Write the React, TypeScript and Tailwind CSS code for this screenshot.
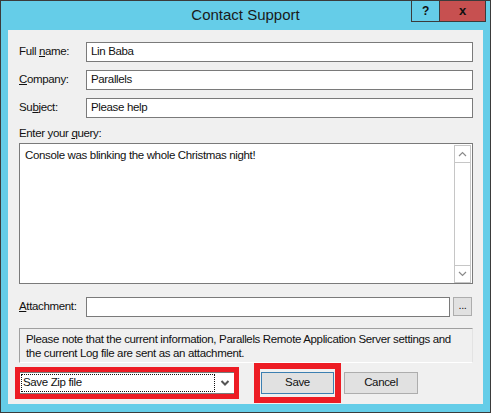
import { ReactNode } from 'react';

const font = "font-['Liberation_Sans',Arial,sans-serif]";

function Field({ label, value }: { label: ReactNode; value: string }) {
    return (
        <div className="flex h-[20px] items-center">
            <div className="w-[67px] shrink-0">{label}</div>
            <div className="flex h-[20px] flex-1 items-center border border-[#7a7a7a] bg-white pl-[4px]">
                {value}
            </div>
        </div>
    );
}

function Chevron({ up, className }: { up?: boolean; className?: string }) {
    return (
        <svg width="9" height="6" viewBox="0 0 9 6" className={className}>
            <polyline
                points={up ? '1,5 4.5,1.5 8,5' : '1,1 4.5,4.5 8,1'}
                fill="none"
                stroke="currentColor"
                strokeWidth="1.2"
            />
        </svg>
    );
}

export default function App() {
    return (
        <div
            className={`flex h-[413px] w-[491px] flex-col border border-[#3b3b3b] bg-[#65cde8] ${font} text-[11.5px] tracking-[-0.35px] text-[#111]`}
        >
            {/* Title bar */}
            <div className="relative flex h-[29px] shrink-0 items-center justify-center">
                <span className="text-[15px] tracking-normal text-[#1a1a1a]">Contact Support</span>
                <div className="absolute right-[4px] top-[-1px] flex">
                    <div className="flex h-[22px] w-[29px] items-center justify-center border border-[#3b3b3b] bg-[#65cde8] text-[12px] font-bold">
                        ?
                    </div>
                    <div className="-ml-px flex h-[22px] w-[47px] items-center justify-center border border-[#3b3b3b] bg-[#c75050] text-[13px] font-bold">
                        x
                    </div>
                </div>
            </div>

            {/* Client area */}
            <div className="mx-[7px] flex h-[374px] flex-col bg-[#f0f0f0] pl-[11px] pr-[10px] pt-[12px]">
                <div className="flex flex-col gap-[8px]">
                    <Field
                        label={
                            <>
                                Full <span className="underline">n</span>ame:
                            </>
                        }
                        value="Lin Baba"
                    />
                    <Field
                        label={
                            <>
                                <span className="underline">C</span>ompany:
                            </>
                        }
                        value="Parallels"
                    />
                    <Field
                        label={
                            <>
                                Su<span className="underline">b</span>ject:
                            </>
                        }
                        value="Please help"
                    />
                </div>

                <div className="mt-[8px] h-[14px] leading-[14px]">
                    Enter your <span className="underline">q</span>uery:
                </div>

                <div className="mt-[3px] flex h-[141px] border border-[#7a7a7a] bg-white">
                    <div className="flex-1 pl-[5px] pt-[4px] leading-[14px]">
                        Console was blinking the whole Christmas night!
                    </div>
                    <div className="mr-px mt-px flex h-[138px] w-[17px] flex-col border border-[#c6c6c6]">
                        <div className="flex h-[17px] items-center justify-center border-b border-[#c6c6c6] text-[#8a8a8a]">
                            <Chevron up />
                        </div>
                        <div className="flex-1" />
                        <div className="flex h-[17px] items-center justify-center border-t border-[#c6c6c6] text-[#8a8a8a]">
                            <Chevron />
                        </div>
                    </div>
                </div>

                {/* Attachment */}
                <div className="mt-[13px] flex h-[20px] items-center">
                    <div className="w-[67px] shrink-0">
                        <span className="underline">A</span>ttachment:
                    </div>
                    <div className="h-[20px] flex-1 border border-[#7a7a7a] bg-white" />
                    <div className="ml-[3px] mr-[1px] flex h-[19px] w-[19px] items-center justify-center self-start border border-[#adadad] bg-[#e1e1e1] pb-[3px] text-[11px]">
                        ...
                    </div>
                </div>

                {/* Info */}
                <div className="mt-[11px] h-[35px] whitespace-nowrap border border-b-white border-l-[#a0a0a0] border-r-[#e3e3e3] border-t-[#a0a0a0] pl-[6px] pt-[3px] leading-[14px]">
                    Please note that the current information, Parallels Remote Application Server settings and
                    <br />
                    the current Log file are sent as an attachment.
                </div>

                {/* Buttons */}
                <div className="-ml-[4px] flex h-[40px] items-center">
                    <div className="flex h-[32px] w-[224px] items-center border-[5px] border-[#ed1c24] bg-white">
                        <div className="flex h-[22px] flex-1 items-center border-y border-[#7a7a7a] pl-[1px] pr-[4px]">
                            <div className="flex h-[18px] w-[194px] items-center border border-dotted border-[#111] pl-[1px]">
                                Save Zip file
                            </div>
                            <svg width="10" height="8" viewBox="0 0 10 8" className="ml-auto text-[#555]">
                                <polyline points="1.5,2 5,5.5 8.5,2" fill="none" stroke="currentColor" strokeWidth="2" />
                            </svg>
                        </div>
                    </div>
                    <div className="ml-[15px] flex h-[40px] w-[87px] items-center justify-center border-[6px] border-[#ed1c24]">
                        <div className="flex h-[22px] w-[73px] items-center justify-center border border-[#3c7fb1] bg-[#e1e1e1]">
                            Save
                        </div>
                    </div>
                    <div className="ml-[3px] flex h-[22px] w-[74px] items-center justify-center border border-[#adadad] bg-[#e1e1e1]">
                        Cancel
                    </div>
                </div>
            </div>
        </div>
    );
}
